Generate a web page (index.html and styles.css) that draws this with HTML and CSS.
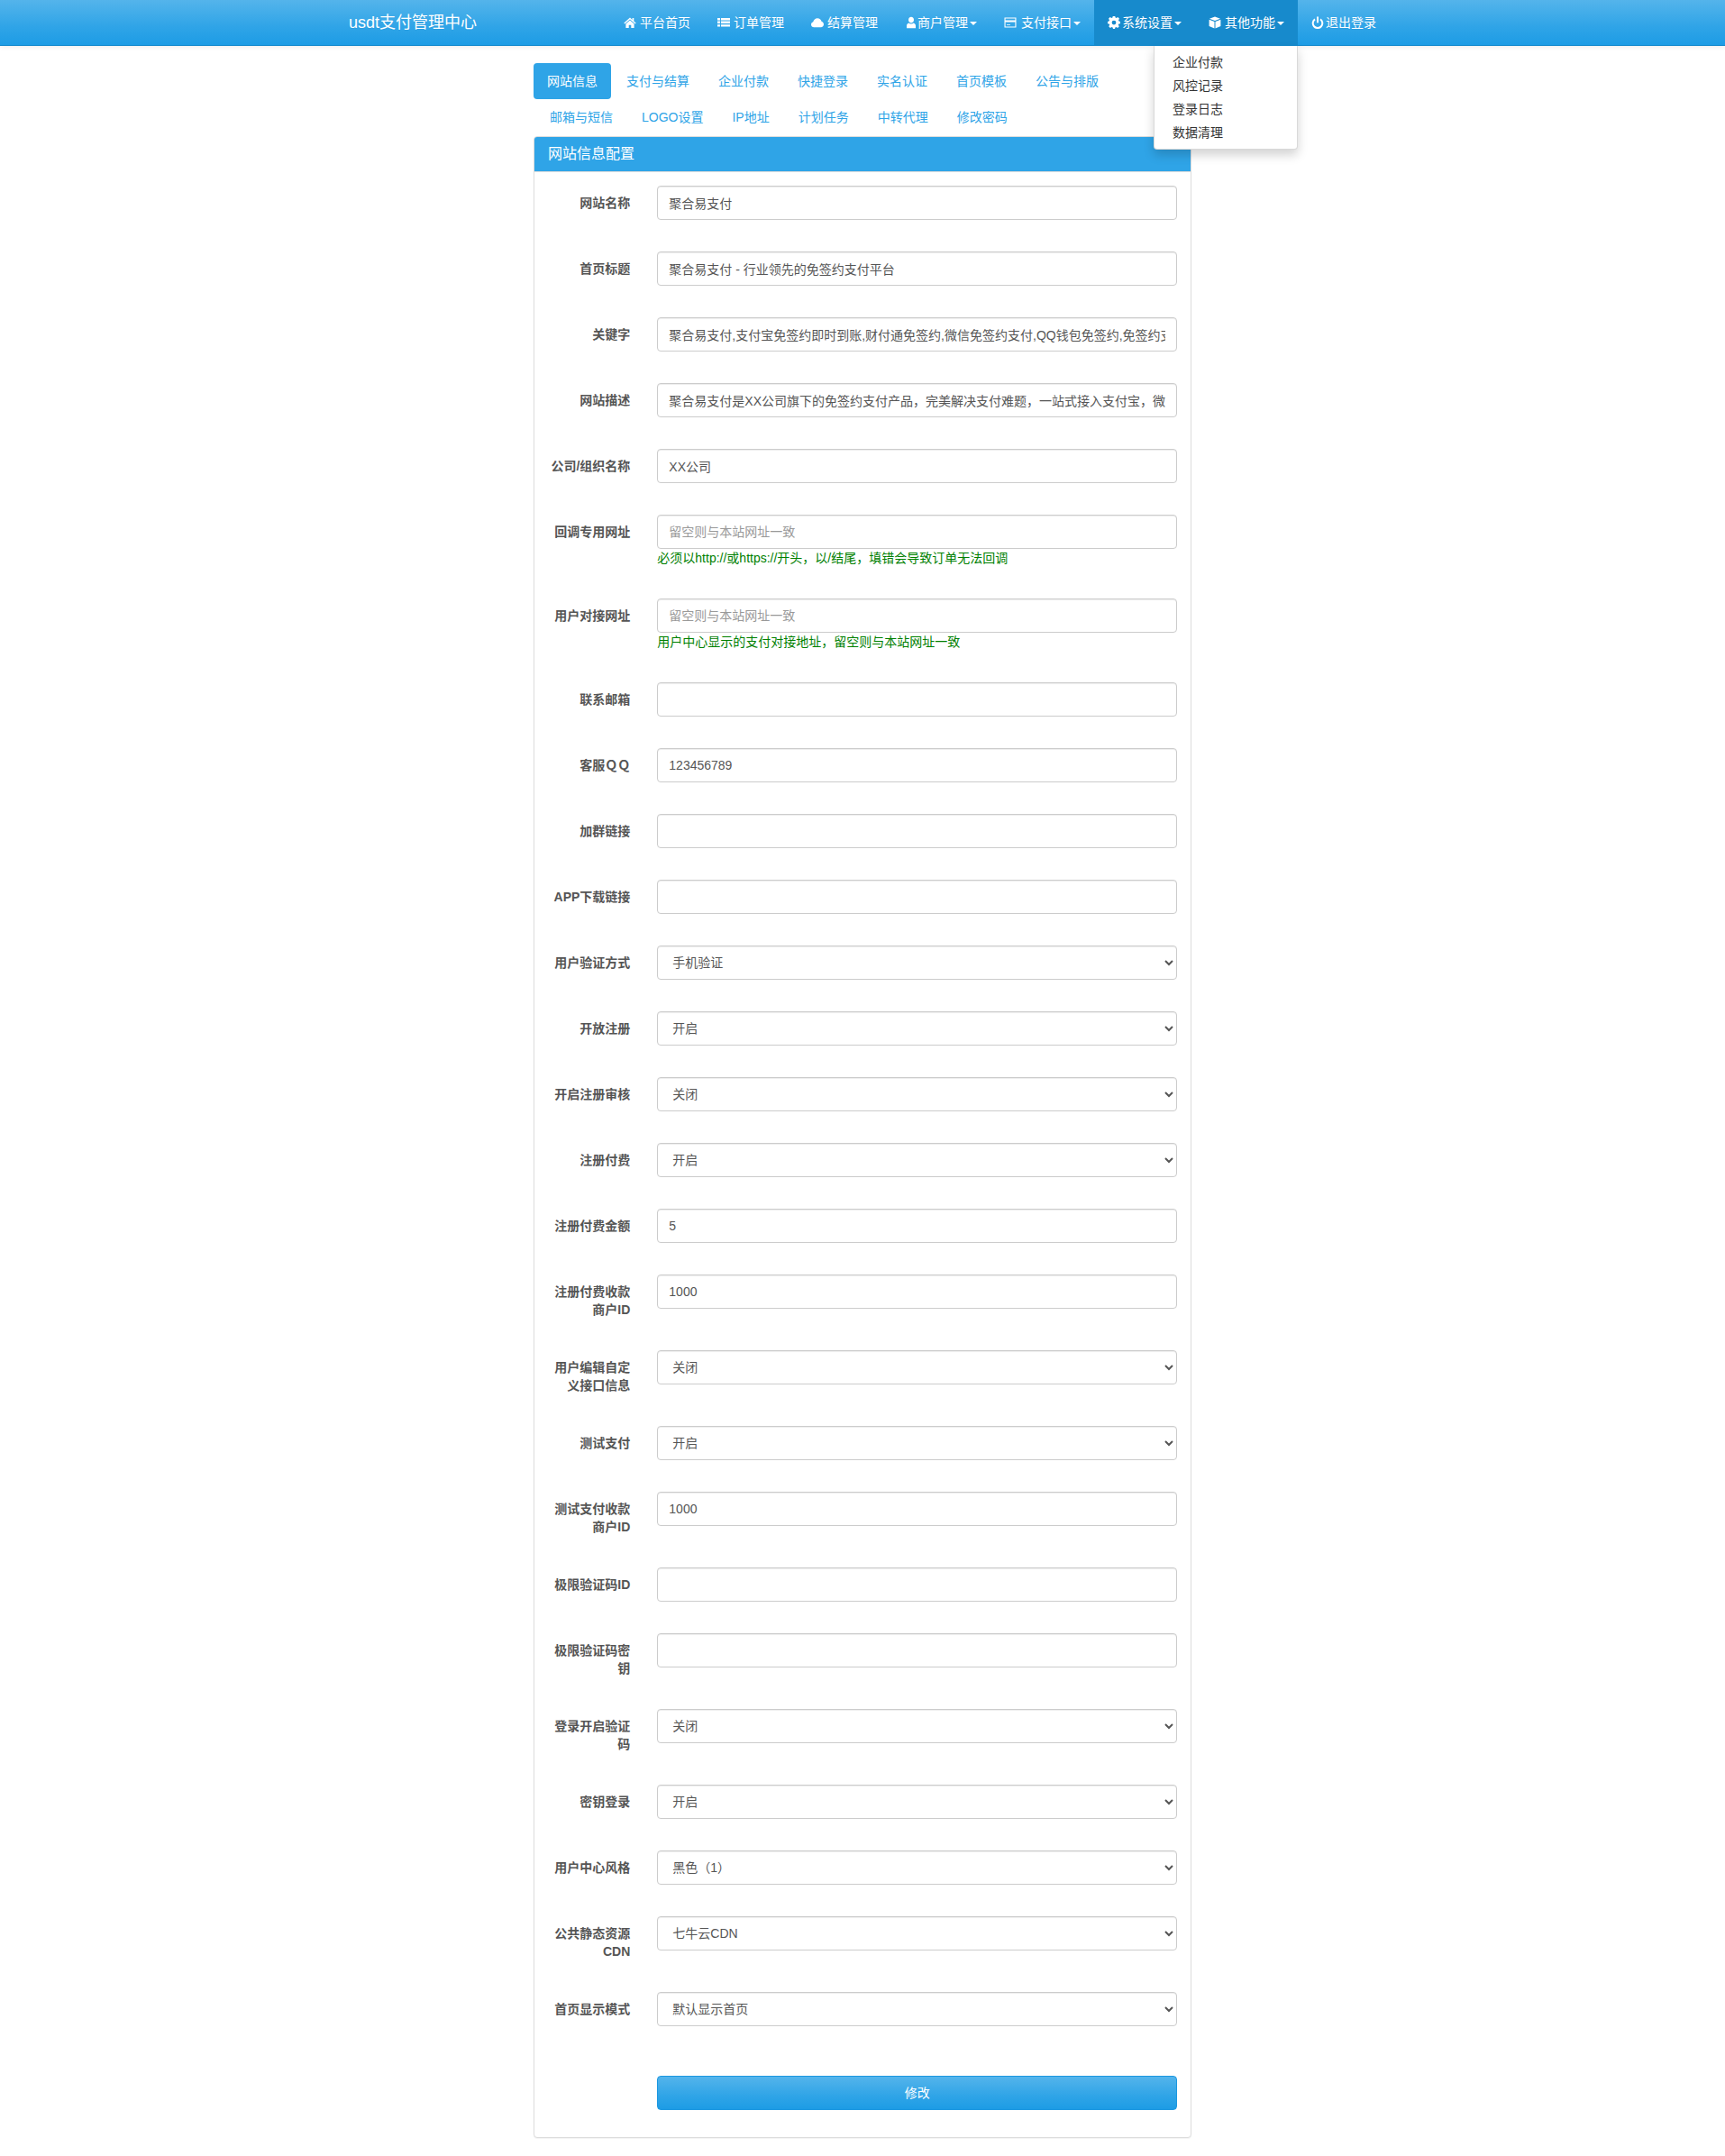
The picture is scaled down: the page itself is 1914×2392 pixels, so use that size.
FILE: index.html
```html
<!DOCTYPE html>
<html lang="zh-CN">
<head>
    <meta charset="UTF-8">
    <meta name="viewport" content="width=device-width, initial-scale=1.0">
    <title>网站信息配置</title>
    <link rel="stylesheet" href="styles.css">
</head>
<body>
    <nav class="navbar">
        <div class="navbar-inner">
            <a class="brand" href="#">usdt支付管理中心</a>
            <ul class="nav-list">
                <li><a href="#"><svg class="icon" viewBox="0 0 14 14"><path d="M7 1.6 0.3 7.6 1.2 8.6 7 3.5 12.8 8.6 13.7 7.6 11.3 5.4V2H9.6V3.9Z"/><path d="M7 4.6 2.4 8.6V13H5.7V9.7H8.3V13H11.6V8.6Z"/></svg>平台首页</a></li>
                <li><a href="#"><svg class="icon" viewBox="0 0 14 14"><path d="M0 2H3V4.4H0ZM4 2H14V4.4H4ZM0 5.6H3V8H0ZM4 5.6H14V8H4ZM0 9.2H3V11.6H0ZM4 9.2H14V11.6H4Z"/></svg>订单管理</a></li>
                <li><a href="#"><svg class="icon" viewBox="0 0 14 14"><path d="M3.2 12.2C1.4 12.2 0 10.9 0 9.2 0 7.8 1 6.6 2.3 6.3 2.7 3.9 4.7 2.2 7 2.2 9.2 2.2 11 3.7 11.5 5.7 13 6.1 14 7.4 14 9 14 10.8 12.6 12.2 10.8 12.2Z"/></svg>结算管理</a></li>
                <li><a href="#"><svg class="icon icon-flush" viewBox="0 0 14 14"><path d="M7 0.8C8.9 0.8 10 2.2 10 4 10 5.7 9 7.4 7 7.4 5 7.4 4 5.7 4 4 4 2.2 5.1 0.8 7 0.8Z"/><path d="M4.4 7.4C5.1 8.1 6 8.4 7 8.4 8 8.4 8.9 8.1 9.6 7.4 11.1 7.9 12 9 12 10.6V13.2H2V10.6C2 9 2.9 7.9 4.4 7.4Z"/></svg>商户管理<span class="caret"></span></a></li>
                <li><a href="#"><svg class="icon icon-wide" viewBox="0 0 14 14"><path fill-rule="evenodd" d="M0.5 1.5H13.5V12.5H0.5ZM1.6 2.6V4.4H12.4V2.6ZM1.6 6.4V11.4H12.4V6.4ZM3 9H7V9.8H3Z"/></svg>支付接口<span class="caret"></span></a></li>
                <li class="open"><a href="#"><svg class="icon icon-tight" viewBox="0 0 14 14"><path fill-rule="evenodd" d="M5.8 0.6H8.2L8.6 2.4 9.7 2.9 11.3 1.9 13 3.6 12 5.2 12.5 6.3 14 6.8V9.2L12.3 9.5 11.8 10.6 12.8 12.2 11.1 13.9 9.5 12.9 8.4 13.4 8 15H6L5.6 13.4 4.5 12.9 2.9 13.9 1.2 12.2 2.2 10.6 1.7 9.5 0 9.2V6.8L1.5 6.3 2 5.2 1 3.6 2.7 1.9 4.3 2.9 5.4 2.4ZM7 5.6A2.4 2.4 0 1 0 7 10.4 2.4 2.4 0 0 0 7 5.6Z" transform="translate(0 -0.9)"/></svg>系统设置<span class="caret"></span></a></li>
                <li class="open">
                    <a href="#"><svg class="icon" viewBox="0 0 14 14"><path d="M7 0.4 13 2.7 7 5.1 1 2.7Z"/><path d="M0.6 3.7 6.5 6V13.6L0.6 11.1Z"/><path d="M13.4 3.7 7.5 6V13.6L13.4 11.1Z"/></svg>其他功能<span class="caret"></span></a>
                    <ul class="dropdown-menu">
                        <li><a href="#">企业付款</a></li>
                        <li><a href="#">风控记录</a></li>
                        <li><a href="#">登录日志</a></li>
                        <li><a href="#">数据清理</a></li>
                    </ul>
                </li>
                <li><a href="#"><svg class="icon icon-tight" viewBox="0 0 14 14"><path fill="none" stroke="#fff" stroke-width="2" d="M4 3.4A5.3 5.3 0 1 0 10 3.4"/><path d="M6 0.6H8V7.2H6Z"/></svg>退出登录</a></li>
            </ul>
        </div>
    </nav>

    <main class="content">
        <ul class="nav-pills">
            <li class="active"><a href="#">网站信息</a></li>
            <li><a href="#">支付与结算</a></li>
            <li><a href="#">企业付款</a></li>
            <li><a href="#">快捷登录</a></li>
            <li><a href="#">实名认证</a></li>
            <li><a href="#">首页模板</a></li>
            <li><a href="#">公告与排版</a></li>
            <li class="row-start"><a href="#">邮箱与短信</a></li>
            <li><a href="#">LOGO设置</a></li>
            <li><a href="#">IP地址</a></li>
            <li><a href="#">计划任务</a></li>
            <li><a href="#">中转代理</a></li>
            <li><a href="#">修改密码</a></li>
        </ul>

        <div class="panel">
            <div class="panel-heading">
                <h3 class="panel-title">网站信息配置</h3>
            </div>
            <form class="panel-body">
                <div class="form-group">
                    <label class="control-label">网站名称</label>
                    <div><input type="text" class="form-control" value="聚合易支付"></div>
                </div>
                <div class="form-group">
                    <label class="control-label">首页标题</label>
                    <div><input type="text" class="form-control" value="聚合易支付 - 行业领先的免签约支付平台"></div>
                </div>
                <div class="form-group">
                    <label class="control-label">关键字</label>
                    <div><input type="text" class="form-control" value="聚合易支付,支付宝免签约即时到账,财付通免签约,微信免签约支付,QQ钱包免签约,免签约支付"></div>
                </div>
                <div class="form-group">
                    <label class="control-label">网站描述</label>
                    <div><input type="text" class="form-control" value="聚合易支付是XX公司旗下的免签约支付产品，完美解决支付难题，一站式接入支付宝，微信，财付通，QQ钱包，微信wap，帮助开发者快速集成到自己相应产品"></div>
                </div>
                <div class="form-group">
                    <label class="control-label">公司/组织名称</label>
                    <div><input type="text" class="form-control" value="XX公司"></div>
                </div>
                <div class="form-group">
                    <label class="control-label">回调专用网址</label>
                    <div>
                        <input type="text" class="form-control" placeholder="留空则与本站网址一致">
                        <div class="help-text">必须以http://或https://开头，以/结尾，填错会导致订单无法回调</div>
                    </div>
                </div>
                <div class="form-group">
                    <label class="control-label">用户对接网址</label>
                    <div>
                        <input type="text" class="form-control" placeholder="留空则与本站网址一致">
                        <div class="help-text">用户中心显示的支付对接地址，留空则与本站网址一致</div>
                    </div>
                </div>
                <div class="form-group">
                    <label class="control-label">联系邮箱</label>
                    <div><input type="text" class="form-control"></div>
                </div>
                <div class="form-group">
                    <label class="control-label">客服ＱＱ</label>
                    <div><input type="text" class="form-control" value="123456789"></div>
                </div>
                <div class="form-group">
                    <label class="control-label">加群链接</label>
                    <div><input type="text" class="form-control"></div>
                </div>
                <div class="form-group">
                    <label class="control-label">APP下载链接</label>
                    <div><input type="text" class="form-control"></div>
                </div>
                <div class="form-group">
                    <label class="control-label">用户验证方式</label>
                    <div><select class="form-control"><option>手机验证</option><option>邮箱验证</option></select></div>
                </div>
                <div class="form-group">
                    <label class="control-label">开放注册</label>
                    <div><select class="form-control"><option>开启</option><option>关闭</option></select></div>
                </div>
                <div class="form-group">
                    <label class="control-label">开启注册审核</label>
                    <div><select class="form-control"><option>关闭</option><option>开启</option></select></div>
                </div>
                <div class="form-group">
                    <label class="control-label">注册付费</label>
                    <div><select class="form-control"><option>开启</option><option>关闭</option></select></div>
                </div>
                <div class="form-group">
                    <label class="control-label">注册付费金额</label>
                    <div><input type="text" class="form-control" value="5"></div>
                </div>
                <div class="form-group">
                    <label class="control-label">注册付费收款商户ID</label>
                    <div><input type="text" class="form-control" value="1000"></div>
                </div>
                <div class="form-group">
                    <label class="control-label">用户编辑自定义接口信息</label>
                    <div><select class="form-control"><option>关闭</option><option>开启</option></select></div>
                </div>
                <div class="form-group">
                    <label class="control-label">测试支付</label>
                    <div><select class="form-control"><option>开启</option><option>关闭</option></select></div>
                </div>
                <div class="form-group">
                    <label class="control-label">测试支付收款商户ID</label>
                    <div><input type="text" class="form-control" value="1000"></div>
                </div>
                <div class="form-group">
                    <label class="control-label">极限验证码ID</label>
                    <div><input type="text" class="form-control"></div>
                </div>
                <div class="form-group">
                    <label class="control-label">极限验证码密钥</label>
                    <div><input type="text" class="form-control"></div>
                </div>
                <div class="form-group">
                    <label class="control-label">登录开启验证码</label>
                    <div><select class="form-control"><option>关闭</option><option>开启</option></select></div>
                </div>
                <div class="form-group">
                    <label class="control-label">密钥登录</label>
                    <div><select class="form-control"><option>开启</option><option>关闭</option></select></div>
                </div>
                <div class="form-group">
                    <label class="control-label">用户中心风格</label>
                    <div><select class="form-control"><option>黑色（1）</option><option>白色（2）</option></select></div>
                </div>
                <div class="form-group">
                    <label class="control-label">公共静态资源CDN</label>
                    <div><select class="form-control"><option>七牛云CDN</option><option>本地</option></select></div>
                </div>
                <div class="form-group">
                    <label class="control-label">首页显示模式</label>
                    <div><select class="form-control"><option>默认显示首页</option><option>跳转登录页</option></select></div>
                </div>
                <div class="form-group form-submit">
                    <div></div>
                    <div><button type="button" class="btn-primary">修改</button></div>
                </div>
            </form>
        </div>
    </main>
</body>
</html>
```

FILE: styles.css
```css
* {
    box-sizing: border-box;
}
body {
    margin: 0;
    background: #fff;
    color: #555;
    font-family: "Liberation Sans", "Noto Sans CJK SC", sans-serif;
    font-size: 14px;
    line-height: 20px;
}
a {
    text-decoration: none;
}
ul {
    list-style: none;
    margin: 0;
    padding: 0;
}

/* top bar */
.navbar {
    height: 51px;
    border-bottom: 1px solid #178acc;
    background: linear-gradient(#54b4eb, #2fa4e7 60%, #1d9ce5);
    box-shadow: 0 1px 6px rgba(0, 0, 0, .08);
}
.navbar-inner {
    display: flex;
    justify-content: space-between;
    width: 1170px;
    margin: 0 auto;
    padding: 0 15px;
}
.brand {
    color: #fff;
    font-size: 18px;
    line-height: 50px;
    text-shadow: 0 1px 0 rgba(0, 0, 0, .05);
}
.nav-list {
    display: flex;
    margin-right: -15px;
}
.nav-list > li {
    position: relative;
}
.nav-list > li > a {
    display: block;
    height: 50px;
    padding: 15px;
    color: #fff;
    text-shadow: 0 1px 0 rgba(0, 0, 0, .05);
}
.nav-list > li.open > a {
    background: #178acc;
}
.icon {
    width: 14px;
    height: 14px;
    margin-right: 4px;
    fill: #fff;
    vertical-align: -2px;
}
.icon-flush {
    margin-right: 0;
}
.icon-tight {
    margin-right: 2px;
}
.icon-wide {
    margin-right: 5px;
}
.caret {
    display: inline-block;
    margin-left: 2px;
    vertical-align: middle;
    border-top: 4px solid #fff;
    border-left: 4px solid transparent;
    border-right: 4px solid transparent;
}
.dropdown-menu {
    position: absolute;
    top: 51px;
    right: 0;
    z-index: 10;
    width: 160px;
    padding: 5px 0;
    background: #fff;
    border: 1px solid rgba(0, 0, 0, .15);
    border-top: 0;
    border-radius: 0 0 4px 4px;
    box-shadow: 0 6px 12px rgba(0, 0, 0, .175);
}
.dropdown-menu a {
    display: block;
    padding: 3px 20px;
    color: #333;
}

/* main column */
.content {
    width: 730px;
    margin: 19px auto 20px;
}
.nav-pills {
    display: flex;
    flex-wrap: wrap;
    column-gap: 2px;
    margin-bottom: 1px;
}
.nav-pills a {
    display: block;
    padding: 10px 15px;
    border-radius: 4px;
    color: #2fa4e7;
}
.nav-pills .active a {
    background: #2fa4e7;
    color: #fff;
}
.nav-pills .row-start {
    margin-left: 3px;
}
.panel {
    border: 1px solid #ddd;
    border-radius: 4px;
    background: #fff;
    box-shadow: 0 1px 1px rgba(0, 0, 0, .05);
}
.panel-heading {
    padding: 10px 15px;
    border-bottom: 1px solid #ddd;
    border-radius: 3px 3px 0 0;
    background: #2fa4e7;
}
.panel-title {
    margin: 0;
    color: #fff;
    font-size: 16px;
    font-weight: 400;
    line-height: 1.1;
}
.panel-body {
    display: block;
    padding: 15px;
}

/* form rows */
.form-group {
    display: grid;
    grid-template-columns: 91.33px 1fr;
    column-gap: 30px;
    margin-bottom: 35px;
}
.form-submit {
    margin-top: 55px;
    margin-bottom: 15px;
}
.control-label {
    padding-top: 9px;
    color: #555;
    font-weight: 700;
    text-align: right;
}
.form-control {
    display: block;
    width: 100%;
    height: 38px;
    padding: 8px 12px;
    border: 1px solid #ccc;
    border-radius: 4px;
    background: #fff;
    box-shadow: inset 0 1px 1px rgba(0, 0, 0, .075);
    color: #555;
    font-family: inherit;
    font-size: 14px;
    line-height: 20px;
}
.form-control::placeholder {
    color: #999;
    opacity: 1;
}
.help-text {
    color: green;
}
.btn-primary {
    display: block;
    width: 100%;
    height: 38px;
    padding: 8px 12px;
    border: 1px solid #1b97e0;
    border-radius: 4px;
    background: linear-gradient(#54b4eb, #2fa4e7 60%, #1d9ce5);
    color: #fff;
    font-family: inherit;
    font-size: 14px;
    line-height: 20px;
}
```
